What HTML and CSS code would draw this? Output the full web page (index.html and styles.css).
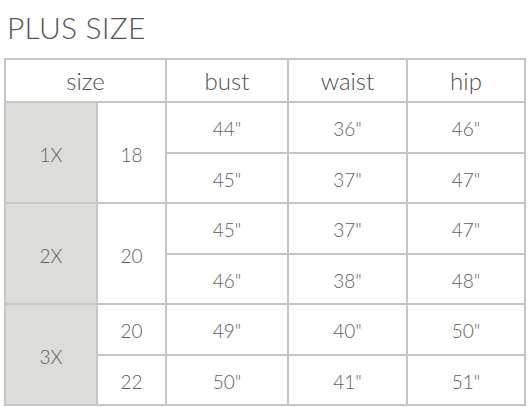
FILE: index.html
```html
<!DOCTYPE html>
<html>
<head>
<meta charset="utf-8">
<link rel="stylesheet" href="styles.css">
</head>
<body>
<h1 class="title">PLUS SIZE</h1>
<table class="chart">
  <colgroup>
    <col class="c-size"><col class="c-num"><col class="c-bust"><col class="c-waist"><col class="c-hip">
  </colgroup>
  <thead>
    <tr class="head"><th colspan="2">size</th><th>bust</th><th>waist</th><th>hip</th></tr>
  </thead>
  <tbody>
    <tr><td class="grp" rowspan="2">1X</td><td rowspan="2">18</td><td>44"</td><td>36"</td><td>46"</td></tr>
    <tr><td>45"</td><td>37"</td><td>47"</td></tr>
    <tr><td class="grp" rowspan="2">2X</td><td rowspan="2">20</td><td>45"</td><td>37"</td><td>47"</td></tr>
    <tr><td>46"</td><td>38"</td><td>48"</td></tr>
    <tr><td class="grp" rowspan="2">3X</td><td>20</td><td>49"</td><td>40"</td><td>50"</td></tr>
    <tr><td>22</td><td>50"</td><td>41"</td><td>51"</td></tr>
  </tbody>
</table>
</body>
</html>
```

FILE: styles.css
```css
html, body {
  margin: 0;
  padding: 0;
  background: #fff;
}
body {
  font-family: Lato, "Liberation Sans", sans-serif;
  color: #5a5a5a;
}
.title {
  margin: 0;
  padding: 11px 0 0 7px;
  font-size: 30px;
  font-weight: 300;
  line-height: 32px;
  color: #555;
  letter-spacing: 0.2px;
}
.chart {
  margin: 15px 0 0 4px;
  width: 520px;
  border-collapse: collapse;
  table-layout: fixed;
}
.c-size { width: 92px; }
.c-num { width: 69px; }
.c-bust { width: 122px; }
.c-waist { width: 119px; }
.c-hip { width: 118px; }
.chart th, .chart td {
  border: 2px solid #c6c6c6;
  text-align: center;
  padding: 0;
}
.chart th {
  height: 41px;
  font-size: 24px;
  font-weight: 300;
  color: #4f4f4f;
}
.chart td {
  height: 45.5px;
  font-size: 19px;
  font-weight: 300;
  color: #5e5e5e;
  padding-top: 3px;
}
.chart td.grp {
  background: #dcdcd9;
}
```
